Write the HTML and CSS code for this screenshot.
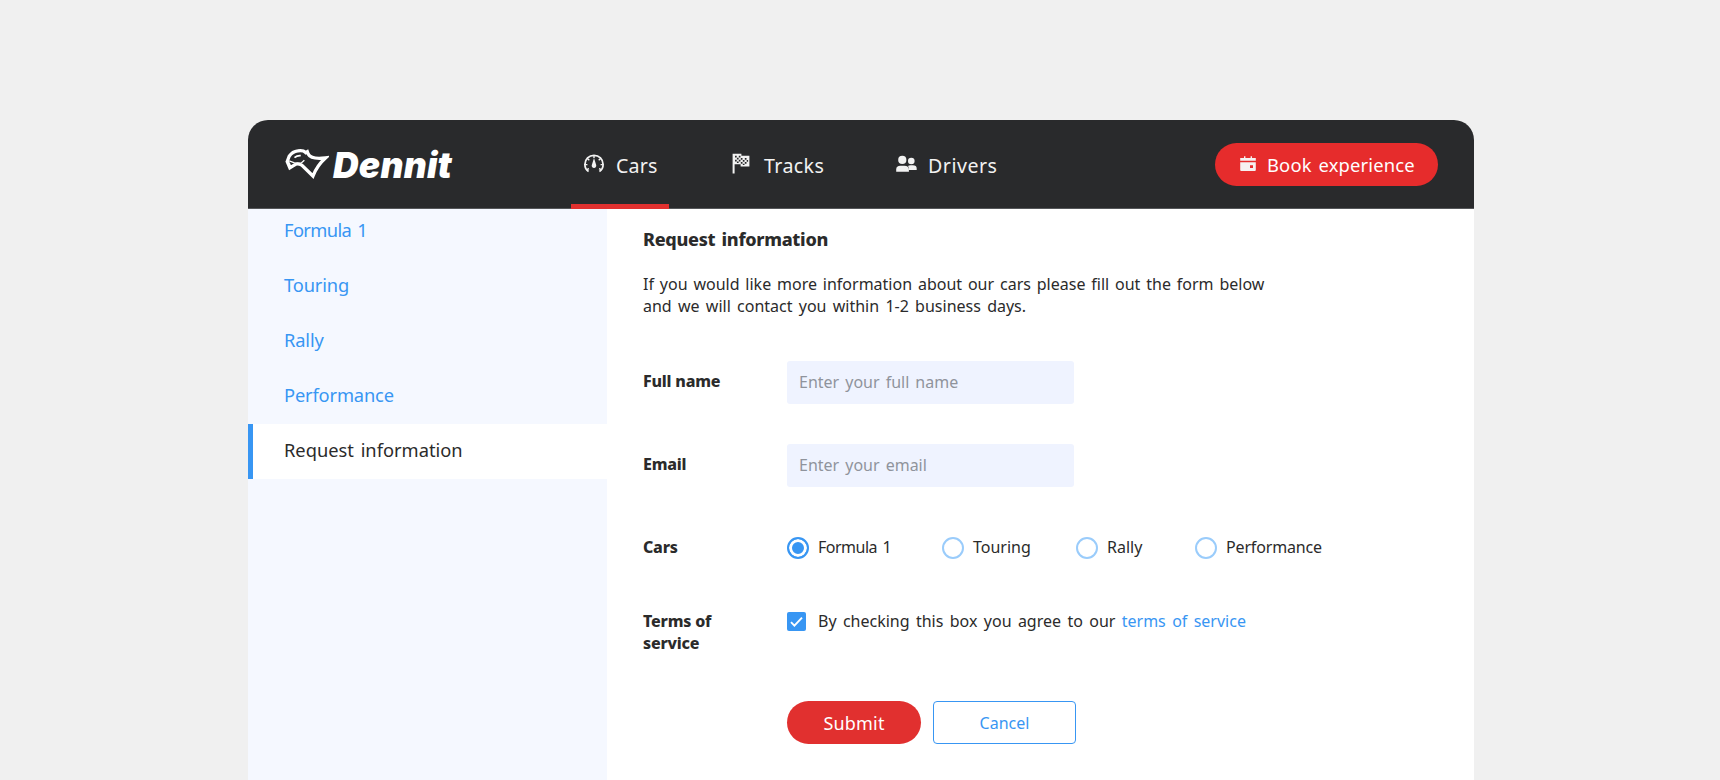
FILE: index.html
```
<!DOCTYPE html>
<html lang="en">
<head>
<meta charset="utf-8">
<title>Dennit</title>
<link rel="stylesheet" href="styles.css">
</head>
<body>
<div class="app">
  <header class="header">
    <a class="logo">
      <svg class="logo-mark" viewBox="0 0 132 94" width="44" height="31" fill="none" stroke="#fff" stroke-width="10" stroke-linejoin="miter">
        <path d="M14 57 L11 47 L6 38 L12 22 Q22 8 38 6 Q54 3 62 11 L67 8 L70 16 Q78 32 122 27 Q97 49 84 82 L50 49 Q36 41 27 49 L14 57 L6 38"/>
        <path d="M12 36 L28 42 L48 43 L58 34" stroke-width="4"/>
        <path d="M28 26 Q36 19 47 20" stroke-width="5"/>
      </svg>
      <span class="logo-name">Dennit</span>
    </a>
    <nav class="nav">
      <a class="nav-item nav-cars active">
        <svg width="22" height="20" viewBox="0 0 22 20" fill="none" stroke="#f2f2f2" stroke-width="1.8">
          <path d="M5.6 17.6 C2.9 15.7 1.9 13.2 1.9 10.4 A9.1 9.1 0 0 1 20.1 10.4 C20.1 13.2 19.1 15.7 16.4 17.6"/>
          <path d="M11 1.4 V4 M4.7 4.7 L6.3 6.3 M17.3 4.7 L15.7 6.3 M2.2 10.6 H4.4 M19.8 10.6 H17.6 M4 15.5 L6 14.6 M18 15.5 L16 14.6" stroke-width="1.4"/>
          <path d="M11 4 L13.2 11 A2.3 2.3 0 1 1 8.8 11 Z" fill="#f2f2f2" stroke="none"/>
        </svg>
        <span>Cars</span>
      </a>
      <a class="nav-item nav-tracks">
        <svg width="18" height="21" viewBox="0 0 18 21">
          <path fill="#f2f2f2" d="M.6 .8 H9.4 V2.8 H17.4 V13.4 H8.6 V11.2 H2.6 V20.6 H.6 Z"/>
          <path fill="#292a2c" d="M3 2.8h1.7v1.7H3zM6.8 2.8h1.7v1.7H6.8zM4.9 4.8h1.7v1.7H4.9zM3 6.8h1.7v1.7H3zM6.8 6.8h1.7v1.7H6.8zM8.8 5h1.7v1.7H8.8zM12.8 5h1.7v1.7h-1.7zM10.8 7h1.7v1.7h-1.7zM8.8 9h1.7v1.7H8.8zM12.8 9h1.7v1.7h-1.7zM4.9 8.6h1.7v1.3H4.9zM14.7 7h1.4v1.7h-1.4zM10.8 10.8h1.7v1.3h-1.7z"/>
        </svg>
        <span>Tracks</span>
      </a>
      <a class="nav-item nav-drivers">
        <svg width="21" height="18" viewBox="0 0 21 18" fill="#f2f2f2">
          <circle cx="6.3" cy="4.9" r="4.1"/>
          <circle cx="15.3" cy="6" r="3.3"/>
          <path d="M.2 16.8 V14.4 Q.2 10.8 4.4 10.8 H8.4 Q12.9 10.8 12.9 14.4 V16.8 Z"/>
          <path d="M12 10.9 Q13 10.3 14.4 10.3 H16.8 Q20.7 10.3 20.7 13.6 V15 H13 V14.2 Q13 12.2 12 10.9 Z"/>
        </svg>
        <span>Drivers</span>
      </a>
    </nav>
    <button class="book">
      <svg width="16" height="16" viewBox="0 0 16 16" fill="#f6f0f0">
        <path d="M.2 2 H4 V.2 H5.4 V2 H10.6 V.2 H12 V2 H15.8 V4.8 H.2 Z"/>
        <path fill-rule="evenodd" d="M.2 6.2 H15.8 V14 Q15.8 15 14.8 15 H1.2 Q.2 15 .2 14 Z M10 9.2 V12 H13 V9.2 Z"/>
      </svg>
      <span>Book experience</span>
    </button>
  </header>
  <div class="body">
    <aside class="sidebar">
      <a class="side-item s-formula">Formula 1</a>
      <a class="side-item">Touring</a>
      <a class="side-item">Rally</a>
      <a class="side-item">Performance</a>
      <a class="side-item current">Request information</a>
    </aside>
    <main class="content">
      <h1 class="title">Request information</h1>
      <p class="intro">If you would like more information about our cars please fill out the form below<br><span class="intro-end">and we will contact you within 1-2 business days.</span></p>
      <form class="form">
        <div class="row row-input">
          <label class="label">Full name</label>
          <input class="input" type="text" placeholder="Enter your full name">
        </div>
        <div class="row row-input">
          <label class="label">Email</label>
          <input class="input" type="text" placeholder="Enter your email">
        </div>
        <div class="row row-cars">
          <span class="label">Cars</span>
          <div class="radios">
            <label class="option o-formula"><span class="radio on"></span>Formula 1</label>
            <label class="option o-touring"><span class="radio"></span>Touring</label>
            <label class="option o-rally"><span class="radio"></span>Rally</label>
            <label class="option o-performance"><span class="radio"></span>Performance</label>
          </div>
        </div>
        <div class="row row-terms">
          <span class="label">Terms of<br>service</span>
          <label class="terms">
            <span class="check"><svg width="19" height="19" viewBox="0 0 19 19" fill="none" stroke="#fff" stroke-width="1.9"><path d="M4 10.2 L7.4 13.6 L15 5.6"/></svg></span>
            <span>By checking this box you agree to our <a class="link">terms of service</a></span>
          </label>
        </div>
        <div class="actions">
          <button class="submit" type="button">Submit</button>
          <button class="cancel" type="button">Cancel</button>
        </div>
      </form>
    </main>
  </div>
</div>
</body>
</html>
```
FILE: styles.css
```
* { box-sizing: border-box; }

body {
  margin: 0;
  height: 780px;
  padding: 120px 246px 0 248px;
  overflow: hidden;
  background: #f0f0f0;
  color: #2b2b2b;
  font: 16px/21.6px "Noto Sans", "Open Sans", sans-serif;
  word-spacing: 1.9px;
}

button, input { font: inherit; word-spacing: inherit; border: 0; padding: 0; }

.app {
  height: 660px;
  display: flex;
  flex-direction: column;
  border-radius: 20px 20px 0 0;
  overflow: hidden;
  background: #fff;
}

.header {
  flex: none;
  display: flex;
  align-items: center;
  height: 89px;
  padding: 0 36px 0 37px;
  background: #292a2c;
  color: #f2f2f2;
  border-bottom: 1px solid #55575a;
}

.logo { display: flex; align-items: center; width: 286px; height: 88px; }
.logo-mark { flex: none; margin-top: 1px; }
.logo-name {
  margin: 3px 0 0 4px;
  color: #fff;
  font: italic 900 35.5px/44px Inter, sans-serif;
  letter-spacing: 0.2px;
}

.nav { display: flex; height: 89px; align-self: flex-start; }
.nav-item {
  display: flex;
  align-items: center;
  height: 89px;
  padding-top: 2px;
  font-size: 19.6px;
  letter-spacing: 0.2px;
}
.nav-item svg { flex: none; margin-top: -4px; }
.nav-cars { width: 98px; padding-left: 12px; gap: 11px; }
.nav-cars.active { background: linear-gradient(#e1302f, #e1302f) bottom / 100% 5px no-repeat; }
.nav-tracks { margin-left: 63px; width: 102px; gap: 14px; letter-spacing: 0.4px; }
.nav-drivers { margin-left: 62px; gap: 11px; letter-spacing: 0.5px; }

.book {
  display: flex;
  align-items: center;
  gap: 11px;
  width: 223px;
  height: 43px;
  margin-left: auto;
  padding: 2px 0 0 25px;
  border-radius: 22px;
  background: #e62c2c;
  color: #fff;
  font-size: 18.4px;
  letter-spacing: 0.15px;
  word-spacing: 2px;
  white-space: nowrap;
}
.book svg { margin-top: -2px; }

.body { flex: 1; display: flex; min-height: 0; overflow: hidden; }

.sidebar {
  width: 359px;
  flex: none;
  display: flex;
  flex-direction: column;
  background: #f5f8ff;
}
.side-item {
  flex: none;
  height: 55px;
  padding-left: 36px;
  color: #3896f3;
  font-size: 18.3px;
  line-height: 52px;
  letter-spacing: -0.15px;
}
.side-item.s-formula { height: 50px; line-height: 42px; letter-spacing: -0.6px; }
.side-item.current {
  padding-left: 31px;
  border-left: 5px solid #3896f3;
  background: #fff;
  color: #2b2b2b;
  letter-spacing: 0;
  word-spacing: 2px;
}

.content { flex: 1; padding: 17px 0 0 36px; }
.title {
  margin: 0;
  font-size: 18px;
  line-height: 26px;
  font-weight: 800;
  letter-spacing: -0.3px;
}
.intro { margin: 22px 0 0; word-spacing: 1.7px; }
.intro-end { word-spacing: 2.1px; }

.form { display: flex; flex-direction: column; padding-top: 44px; }
.row { display: flex; align-items: center; }
.label {
  width: 144px;
  flex: none;
  font-weight: 800;
  letter-spacing: -0.2px;
  word-spacing: 0;
}
.row-input { height: 43px; margin-bottom: 40px; }
.row-input .label { margin-top: -1px; }
.input {
  width: 287px;
  height: 43px;
  padding: 0 0 2px 12px;
  border-radius: 3px;
  background: #eff3ff;
}
.input::placeholder { color: #8f939c; opacity: 1; }

.row-cars { height: 22px; margin-top: 10px; }
.radios { display: flex; }
.option { display: flex; align-items: center; gap: 9px; }
.o-formula { width: 155px; letter-spacing: -0.5px; }
.o-touring { width: 134px; }
.o-rally { width: 119px; }
.o-performance { letter-spacing: -0.15px; }
.radio {
  width: 22px;
  height: 22px;
  border: 2px solid #9accfb;
  border-radius: 50%;
}
.radio.on {
  border-color: #3896f3;
  background: #3896f3;
  box-shadow: inset 0 0 0 3px #fff;
}

.row-terms { align-items: flex-start; margin-top: 52px; }
.terms { display: flex; gap: 12px; word-spacing: 2.2px; }
.check {
  width: 19px;
  height: 19px;
  margin-top: 1px;
  border-radius: 2px;
  background: #3896f3;
}
.check svg { display: block; }
.link { color: #3896f3; }

.actions { display: flex; gap: 12px; margin: 47px 0 0 144px; }
.submit {
  width: 134px;
  height: 43px;
  padding-top: 2px;
  border-radius: 22px;
  background: #e1302f;
  color: #fff;
  font-size: 18px;
  letter-spacing: 0.2px;
}
.cancel {
  width: 143px;
  height: 43px;
  padding-top: 1px;
  border: 1px solid #3896f3;
  border-radius: 4px;
  background: #fff;
  color: #3896f3;
}
```
